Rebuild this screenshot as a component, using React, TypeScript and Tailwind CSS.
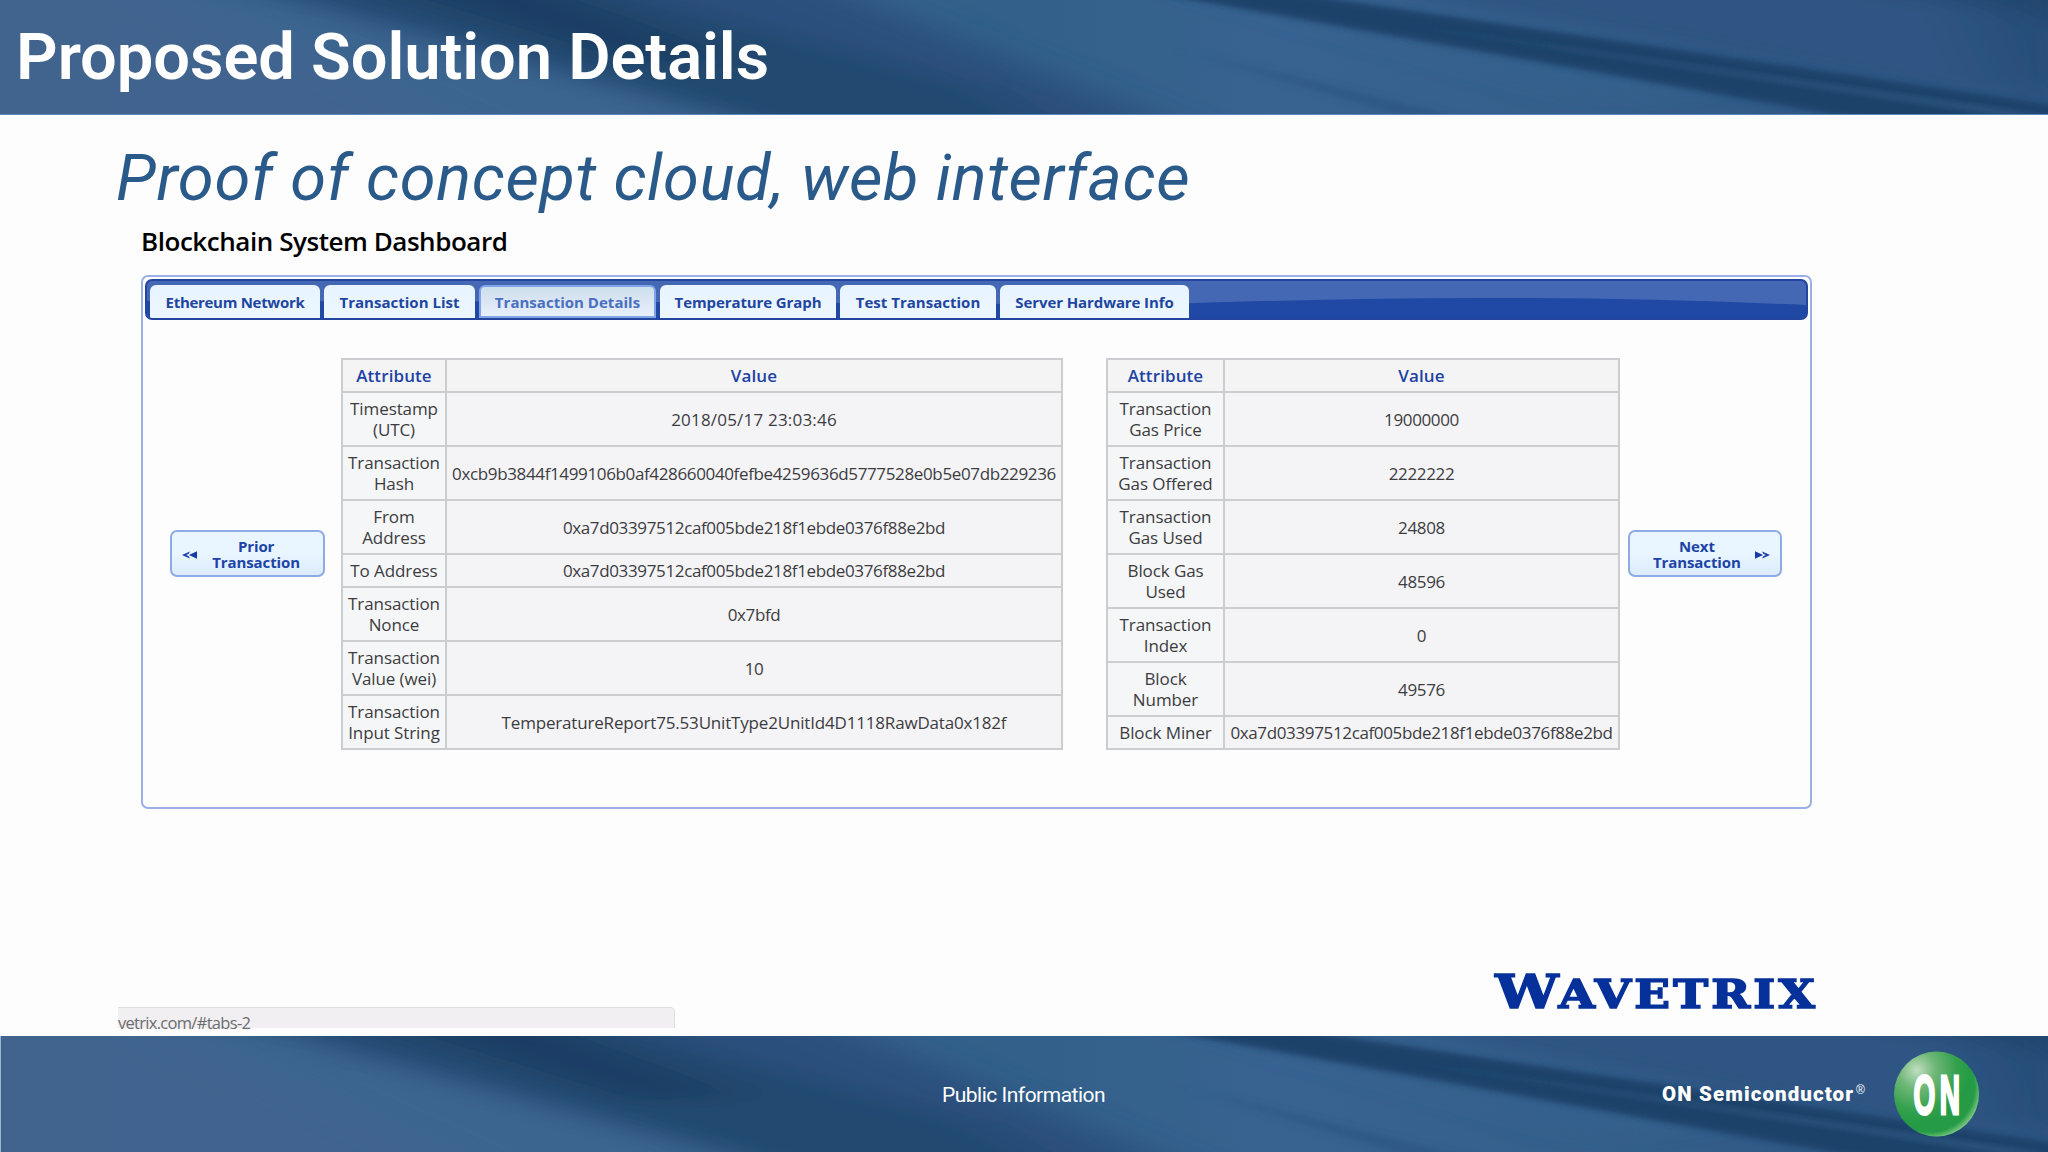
import { useId } from 'react'
import clsx from 'clsx'

type Row = { attribute: string[]; value: string; tracking?: string }

const TABS = [
  { label: 'Ethereum Network', width: 'w-[170px]', tracking: 'tracking-[-0.3px]' },
  { label: 'Transaction List', width: 'w-[151px]', tracking: 'tracking-[0.02px]' },
  { label: 'Transaction Details', width: 'w-[177px]', tracking: 'tracking-[0.02px]', active: true },
  { label: 'Temperature Graph', width: 'w-[176px]', tracking: 'tracking-[-0.1px]' },
  { label: 'Test Transaction', width: 'w-[156px]', tracking: 'tracking-[0.02px]' },
  { label: 'Server Hardware Info', width: 'w-[189px]', tracking: 'tracking-[-0.1px]' },
]

const LEFT_ROWS: Row[] = [
  { attribute: ['Timestamp', '(UTC)'], value: '2018/05/17 23:03:46', tracking: 'tracking-[0.2px]' },
  { attribute: ['Transaction', 'Hash'], value: '0xcb9b3844f1499106b0af428660040fefbe4259636d5777528e0b5e07db229236' },
  { attribute: ['From', 'Address'], value: '0xa7d03397512caf005bde218f1ebde0376f88e2bd' },
  { attribute: ['To Address'], value: '0xa7d03397512caf005bde218f1ebde0376f88e2bd' },
  { attribute: ['Transaction', 'Nonce'], value: '0x7bfd' },
  { attribute: ['Transaction', 'Value (wei)'], value: '10' },
  {
    attribute: ['Transaction', 'Input String'],
    value: 'TemperatureReport75.53UnitType2UnitId4D1118RawData0x182f',
    tracking: 'tracking-[-0.18px]',
  },
]

const RIGHT_ROWS: Row[] = [
  { attribute: ['Transaction', 'Gas Price'], value: '19000000' },
  { attribute: ['Transaction', 'Gas Offered'], value: '2222222' },
  { attribute: ['Transaction', 'Gas Used'], value: '24808' },
  { attribute: ['Block Gas', 'Used'], value: '48596' },
  { attribute: ['Transaction', 'Index'], value: '0' },
  { attribute: ['Block', 'Number'], value: '49576' },
  { attribute: ['Block Miner'], value: '0xa7d03397512caf005bde218f1ebde0376f88e2bd' },
]

// Brushed blue texture behind the header and the footer
function Waves() {
  const id = useId()
  return (
    <svg className="absolute inset-0 h-full w-full" viewBox="0 0 2048 116" preserveAspectRatio="none">
      <defs>
        <linearGradient id={`${id}base`} x1="0" x2="1" y1="0" y2="0">
          <stop offset="0" stopColor="#41648f" />
          <stop offset="0.3" stopColor="#40648f" />
          <stop offset="0.48" stopColor="#32608a" />
          <stop offset="0.62" stopColor="#386290" />
          <stop offset="0.8" stopColor="#345e8b" />
          <stop offset="1" stopColor="#2b5280" />
        </linearGradient>
        <filter id={`${id}wide`} x="-20%" y="-80%" width="140%" height="260%">
          <feGaussianBlur stdDeviation="36 8" />
        </filter>
        <filter id={`${id}fine`} x="-20%" y="-80%" width="140%" height="260%">
          <feGaussianBlur stdDeviation="10 2.5" />
        </filter>
      </defs>
      <rect width="2048" height="116" fill={`url(#${id}base)`} />
      <g filter={`url(#${id}wide)`}>
        <path d="M120-30 400-30 780 150 520 150Z" fill="#3a658f" />
        <path d="M170-30 790-30 1230 150 840 150Z" fill="#2a507d" />
        <path d="M220-30 540-30 980 90 1090 150 840 150Z" fill="#23496f" />
        <path d="M330-30 500-30 740 60 640 66Z" fill="#1a3d64" />
        <path d="M1140-30 1220-30 1700 90 1600 100Z" fill="#36618d" />
        <path d="M1280-30 2100-30 2100 130Z" fill="#2e5583" />
        <path d="M1960-30 2100-30 2100 110 2010 80Z" fill="#274d78" />
        <path d="M1800-30 2100-30 2100 30Z" fill="#21466e" />
      </g>
      <g filter={`url(#${id}fine)`}>
        <path d="M1110-15 1240-15 2090 112 2090 140 1960 140Z" fill="#1f436b" />
        <path d="M1180 50 1480 124 1420 124Z" fill="#2f5986" />
        <path d="M1380 22 2048 118 2010 118Z" fill="#2f5680" />
      </g>
    </svg>
  )
}

function ArrowsIcon({ flip = false }: { flip?: boolean }) {
  return (
    <svg className={clsx('mt-[2px] h-2 w-[15px]', flip && '-scale-x-100')} viewBox="0 0 16 10" preserveAspectRatio="none" fill="#173da5">
      <path d="M0 .3 8.6 5 0 9.7Z" />
      <path d="M7.6 .5 16 5 7.6 9.5 8.8 6.6 11.6 5 8.8 3.4Z" />
    </svg>
  )
}

function NavButton({ label, prior = false }: { label: string; prior?: boolean }) {
  return (
    <button
      className={clsx(
        'mt-[172px] flex h-[47px] shrink-0 items-center justify-between rounded-[7px] border-2 border-[#8fabe3] bg-linear-to-b from-[#e9f5ff] from-50% to-[#dcecfd]',
        prior ? 'w-[155px] pr-[23px] pl-[10px]' : 'ml-[8px] w-[154px] pr-[10px] pl-[23px]',
      )}
    >
      {prior && <ArrowsIcon flip />}
      <span className="text-center text-[15px] leading-4 font-bold tracking-[-0.1px] text-[#1c44a6]">
        {label}
        <br />
        Transaction
      </span>
      {!prior && <ArrowsIcon />}
    </button>
  )
}

function AttributeTable({ rows, className, attributeWidth }: { rows: Row[]; className: string; attributeWidth: string }) {
  return (
    <table className={clsx('shrink-0 table-fixed border-collapse bg-[#f4f4f7] text-center text-[17px] text-[#3c3c40]', className)}>
      <thead>
        <tr className="h-[33px] bg-[#f4f4f5] text-[#1d43a4]">
          <th className={clsx('border-2 border-[#cccdd0] p-0 font-semibold tracking-[0.1px]', attributeWidth)}>Attribute</th>
          <th className="border-2 border-[#cccdd0] p-0 font-semibold tracking-[0.1px]">Value</th>
        </tr>
      </thead>
      <tbody>
        {rows.map((row) => (
          <tr key={row.attribute.join(' ')} className={row.attribute.length > 1 ? 'h-[54px]' : 'h-[33px]'}>
            <td className="border-2 border-[#cccdd0] bg-[#f5f6f8] p-0 leading-[21px] tracking-[-0.1px] whitespace-nowrap">
              {row.attribute.map((line) => (
                <div key={line}>{line}</div>
              ))}
            </td>
            <td className={clsx('border-2 border-[#cccdd0] p-0 leading-[21px] whitespace-nowrap', row.tracking ?? 'tracking-[-0.36px]')}>
              {row.value}
            </td>
          </tr>
        ))}
      </tbody>
    </table>
  )
}

function TabBar() {
  return (
    <div className="relative flex h-[41px] items-end gap-[4px] overflow-hidden rounded-[7px] border-2 border-[#2345a0] bg-[#4468b3] px-[3px]">
      <svg className="absolute inset-0 h-full w-full" viewBox="0 0 1660 37" preserveAspectRatio="none">
        <path d="M0 20Q500 20 1000 24Q1350 10 1660 24V37H0Z" fill="#2048a5" />
      </svg>
      {TABS.map((tab) => (
        <div
          key={tab.label}
          className={clsx(
            'relative flex h-[33px] shrink-0 items-center justify-center rounded-t-[6px] pt-[2px] text-[15px] font-bold whitespace-nowrap',
            tab.width,
            tab.tracking,
            tab.active
              ? 'border-2 border-[#81a3e8] bg-linear-to-b from-[#cedeec] to-[#e8effb] text-[#4a6fc0]'
              : 'bg-linear-to-b from-[#e7f3ff] to-[#edf7ff] text-[#1f469f]',
          )}
        >
          {tab.label}
        </div>
      ))}
    </div>
  )
}

function OnLogo() {
  return (
    <svg className="mb-[1px] ml-[27px] h-[86px] w-[86px]" viewBox="0 0 86 86">
      <defs>
        <radialGradient id="ball" cx="0.27" cy="0.22" r="0.62">
          <stop offset="0" stopColor="#c0dec0" />
          <stop offset="0.35" stopColor="#6fb777" />
          <stop offset="0.75" stopColor="#35a14e" />
          <stop offset="1" stopColor="#249b44" />
        </radialGradient>
        <radialGradient id="rim" cx="0.42" cy="0.42" r="0.6">
          <stop offset="0.88" stopColor="#8fd08f" stopOpacity="0" />
          <stop offset="1" stopColor="#8fd08f" stopOpacity="0.75" />
        </radialGradient>
      </defs>
      <circle cx="42.5" cy="43" r="42.5" fill="url(#ball)" />
      <circle cx="42.5" cy="43" r="42.5" fill="url(#rim)" />
      <text
        transform="translate(19.5 63) scale(0.5 1)"
        fontFamily="Liberation Sans"
        fontWeight="700"
        fontSize="56"
        letterSpacing="9"
        fill="#fff"
        stroke="#fff"
        strokeWidth="3"
      >
        ON
      </text>
    </svg>
  )
}

export default function App() {
  return (
    <div className="flex h-[1152px] w-[2048px] flex-col overflow-hidden bg-[#fdfdfe] font-['Open_Sans','Noto_Sans',sans-serif]">
      <header className="relative h-[115px] shrink-0 border-b border-[#5f87b9]">
        <Waves />
        <h1 className="relative pt-[20px] pl-[16px] font-['Roboto',sans-serif] text-[65px] leading-[74px] font-semibold tracking-[-0.05px] whitespace-nowrap text-white">
          Proposed Solution Details
        </h1>
      </header>

      <main className="flex flex-1 flex-col">
        <h2 className="mt-[27px] ml-[116px] font-['Roboto',sans-serif] text-[65px] leading-[72px] tracking-[0.65px] whitespace-nowrap text-[#2a5a8a] italic">
          Proof of concept cloud, web interface
        </h2>
        <h3 className="mt-[7px] ml-[141px] text-[26px] leading-[40px] font-semibold tracking-[-0.45px] whitespace-nowrap text-black">
          Blockchain System Dashboard
        </h3>

        <section className="mt-[14px] ml-[141px] h-[534px] w-[1671px] rounded-[7px] border-2 border-[#9ab0e6] p-[2px]">
          <TabBar />
          <div className="flex pt-[38px] pl-[25px]">
            <NavButton label="Prior" prior />
            <AttributeTable rows={LEFT_ROWS} className="ml-[16px] w-[722px]" attributeWidth="w-[104px]" />
            <AttributeTable rows={RIGHT_ROWS} className="ml-[43px] w-[514px]" attributeWidth="w-[117px]" />
            <NavButton label="Next" />
          </div>
        </section>

        <div className="mt-auto flex items-end justify-between pr-[230px] pb-[8px] pl-[118px]">
          <div className="h-[21px] w-[557px] rounded-tr-[5px] border-t border-r border-[#dfdde0] bg-[#f1eff1] text-[16.5px] leading-[29px] tracking-[-0.7px] text-[#6c6c6f]">
            vetrix.com/#tabs-2
          </div>
          <div className="mb-[9px] origin-right scale-x-[1.2] font-['DejaVu_Serif',serif] text-[47px] leading-[50px] font-bold whitespace-nowrap text-[#06309a] [-webkit-text-stroke:1.6px_#06309a]">
            W<span className="text-[39px] tracking-[2.7px]">AVETRIX</span>
          </div>
        </div>
      </main>

      <footer className="relative flex h-[116px] shrink-0 items-center border-l border-[#9db6d2] font-['Liberation_Sans',sans-serif] text-white">
        <Waves />
        <div className="relative mt-[4px] ml-[941px] w-[163px] font-['Roboto',sans-serif] text-[21px] tracking-[-0.5px] whitespace-nowrap">
          Public Information
        </div>
        <div className="relative ml-[557px] flex items-center">
          <span className="w-[193px] font-['Roboto',sans-serif] text-[20.5px] font-black tracking-[1.1px] whitespace-nowrap">ON Semiconductor</span>
          <span className="mb-[8px] ml-[1px] w-[11px] text-[12px]">®</span>
          <OnLogo />
        </div>
      </footer>
    </div>
  )
}
